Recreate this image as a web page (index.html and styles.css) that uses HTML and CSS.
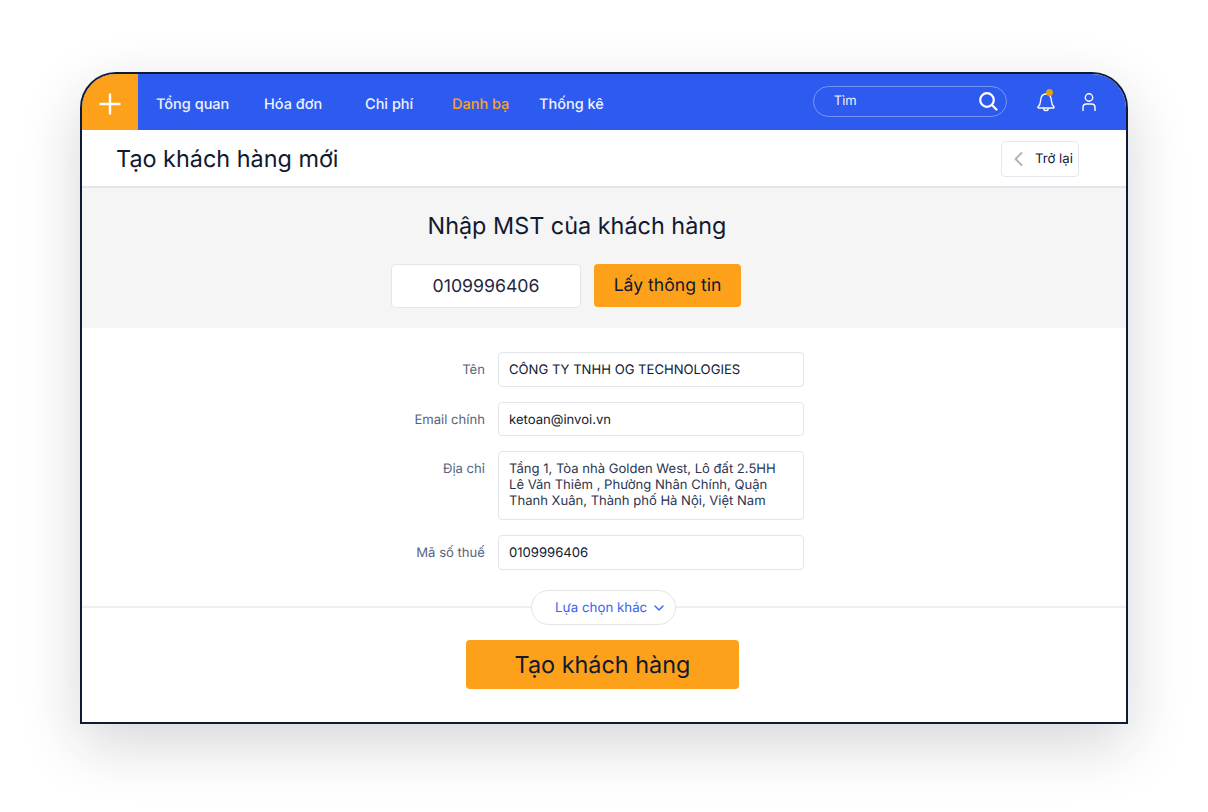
FILE: index.html
```html
<!DOCTYPE html>
<html lang="vi">
<head>
<meta charset="utf-8">
<title>Tạo khách hàng mới</title>
<link rel="stylesheet" href="styles.css">
</head>
<body>
<div class="frame">
  <header class="topbar">
    <div class="plus"><svg width="24" height="24" viewBox="0 0 24 24"><path d="M12 1.500v21M1.500 12h21" stroke="#fff" stroke-width="2.400" fill="none"/></svg></div>
    <nav class="nav">
      <a>Tổng quan</a>
      <a>Hóa đơn</a>
      <a>Chi phí</a>
      <a class="active">Danh bạ</a>
      <a>Thống kê</a>
    </nav>
    <div class="search">
      <span>Tìm</span>
      <svg width="20" height="20" viewBox="0 0 20 20" fill="none" stroke="#fff" stroke-width="2.200"><circle cx="9" cy="9" r="6.800"/><path d="M14 14l4.500 4.500" stroke-linecap="round"/></svg>
    </div>
    <div class="bell">
      <svg width="20" height="22" viewBox="0 0 20 22" fill="none" stroke="#fff" stroke-width="1.300"><path d="M2 17c1.800-1.600 2.400-3.400 2.600-6.400C4.800 6.500 6.600 4 10 4s5.200 2.500 5.400 6.600c.2 3 .8 4.800 2.600 6.400.4.500 0 1-.6 1H2.600c-.6 0-1-.5-.6-1z" stroke-linejoin="round"/><path d="M7.500 18.500c.3 1.500 1.300 2.200 2.500 2.200s2.200-.7 2.500-2.200"/></svg>
      <i class="dot"></i>
    </div>
    <div class="user">
      <svg width="16" height="20" viewBox="0 0 16 20" fill="none" stroke="#fff" stroke-width="1.400"><circle cx="8" cy="5.500" r="3.700"/><path d="M2 18.500v-3c0-2 1.500-3.500 3.500-3.500h5c2 0 3.500 1.500 3.500 3.500v3" stroke-linecap="round"/></svg>
    </div>
  </header>

  <div class="titlebar">
    <h1>Tạo khách hàng mới</h1>
    <button class="back">
      <svg width="9" height="14" viewBox="0 0 9 14" fill="none" stroke="#aab2c2" stroke-width="1.800"><path d="M7.500 1L1.500 7l6 6" stroke-linecap="round" stroke-linejoin="round"/></svg>
      <span>Trở lại</span>
    </button>
  </div>

  <section class="lookup">
    <h2>Nhập MST của khách hàng</h2>
    <div class="lookup-row">
      <div class="mst">0109996406</div>
      <button class="fetch">Lấy thông tin</button>
    </div>
  </section>

  <section class="form">
    <div class="row"><label>Tên</label><div class="field">CÔNG TY TNHH OG TECHNOLOGIES</div></div>
    <div class="row"><label>Email chính</label><div class="field">ketoan@invoi.vn</div></div>
    <div class="row top"><label>Địa chỉ</label><div class="field area">Tầng 1, Tòa nhà Golden West, Lô đất 2.5HH<br>Lê Văn Thiêm , Phường Nhân Chính, Quận<br>Thanh Xuân, Thành phố Hà Nội, Việt Nam</div></div>
    <div class="row"><label>Mã số thuế</label><div class="field">0109996406</div></div>
  </section>

  <div class="divider">
    <button class="more">
      <span>Lựa chọn khác</span>
      <svg width="10" height="6" viewBox="0 0 10 6" fill="none" stroke="#3a62ee" stroke-width="1.400"><path d="M1 1l4 4 4-4" stroke-linecap="round" stroke-linejoin="round"/></svg>
    </button>
  </div>

  <div class="actions"><button class="create">Tạo khách hàng</button></div>
</div>
</body>
</html>
```

FILE: styles.css
```css
* { box-sizing: border-box; }
html, body { margin: 0; height: 812px; overflow: hidden; background: #fff; }
body { padding: 72px 80px 88px; font-family: Inter, "Noto Sans", sans-serif; color: #111a30; text-rendering: geometricPrecision; }
button { font-family: inherit; cursor: pointer; text-rendering: geometricPrecision; }

.frame {
  width: 1048px;
  height: 652px;
  border: 2px solid #0e1a36;
  border-radius: 36px 36px 0 0;
  background: #fff;
  overflow: hidden;
  box-shadow: 0 20px 60px rgba(20, 25, 40, .18);
}

.topbar { height: 56px; background: #2d5bf0; display: flex; align-items: center; }
.plus { width: 56px; height: 56px; background: #fda11b; display: flex; align-items: center; justify-content: center; flex: none; padding-top: 4px; }
.nav { display: grid; grid-template-columns: 108px 101px 87px 88px auto; margin-left: 18px; font-size: 14.500px; font-weight: 500; color: #eef2ff; padding-top: 4px; }
.nav a:last-child { margin-left: -1px; }
.nav .active { color: #fda11b; }

.search {
  width: 194px; height: 31px; margin-left: 209px; margin-bottom: 2px;
  border: 1px solid rgba(255,255,255,.35); border-radius: 16px;
  display: flex; align-items: center; justify-content: space-between;
  padding: 0 8px 0 20px; font-size: 13px; color: #eef2ff;
}
.bell { position: relative; width: 20px; height: 22px; margin-left: 29px; margin-bottom: 3px; }
.dot { position: absolute; left: 10px; top: -1px; width: 7px; height: 7px; border-radius: 50%; background: #e5a00f; }
.user { margin-left: 25px; height: 20px; }

.titlebar {
  height: 58px; display: flex; align-items: center; justify-content: space-between;
  padding: 2px 47px 0 34px; border-bottom: 2px solid #e3e5ea; background: #fff;
}
h1 { margin: 0 0 2px; font-size: 23.400px; font-weight: 400; color: #111a30; }
.back {
  width: 78px; height: 36px; border: 1px solid #e6e8ee; border-radius: 4px; background: #fff;
  display: flex; align-items: center; gap: 12px; padding: 0 0 0 12px; font-size: 13.200px; color: #111a30;
}

.lookup { height: 140px; background: #f5f5f6; padding: 22px 54px 0 0; display: flex; flex-direction: column; align-items: center; }
h2 { margin: 0; font-size: 23.400px; line-height: 32px; font-weight: 400; color: #111a30; }
.lookup-row { display: flex; gap: 13px; margin: 22px 22px 0 0; }
.mst {
  width: 190px; height: 44px; background: #fff; border: 1px solid #e3e5ea; border-radius: 4px;
  display: flex; align-items: center; justify-content: center; font-size: 17.700px; color: #1f2740;
}
.fetch { width: 147px; height: 43px; background: #fda11b; border: 0; border-radius: 4px; font-size: 17.600px; color: #111a30; }

.form { padding-top: 24px; display: flex; flex-direction: column; gap: 15px; }
.row { display: grid; grid-template-columns: 403px 306px; column-gap: 13px; align-items: center; }
.row.top { align-items: start; }
.row.top label { padding-top: 10px; }
.row label { text-align: right; font-size: 13.100px; color: #57637c; padding-top: 2px; }
.field {
  height: 34.500px; border: 1px solid #e3e5ea; border-radius: 4px; background: #fff;
  display: flex; align-items: center; padding: 2px 10px 0; font-size: 13.100px; color: #111a30;
}
.field.area { display: block; height: 69px; padding: 9px 10px; font-size: 13.050px; line-height: 16px; color: #2c3550; }

.divider { position: relative; height: 2px; background: #efefef; margin-top: 36.500px; }
.more {
  position: absolute; left: 449px; top: -16px; width: 145px; height: 35px;
  background: #fff; border: 1px solid #e3e5ea; border-radius: 18px;
  display: flex; align-items: center; gap: 7px; padding: 0 0 0 23px; font-size: 13.300px; color: #3a62ee;
}
.actions { display: flex; justify-content: center; padding: 32px 3px 0 0; }
.create { width: 273px; height: 49px; background: #fda11b; border: 0; border-radius: 4px; font-size: 23.400px; color: #111a30; }
```
